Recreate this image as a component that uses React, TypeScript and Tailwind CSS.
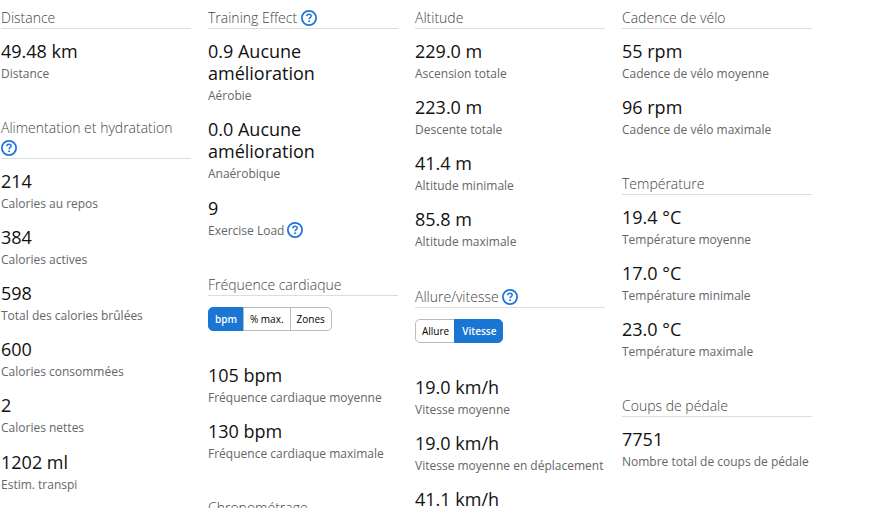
import React from 'react';

interface Stat {
    value: string;
    label: string;
    help?: boolean;
}

interface SectionProps {
    title: string;
    help?: boolean;
    className?: string;
    stats?: Stat[];
    children?: React.ReactNode;
}

const HelpIcon: React.FC<{ className?: string }> = ({ className = '' }) => (
    <svg className={`inline-block h-4 w-4 shrink-0 ${className}`} viewBox="0 0 16 16" fill="none">
        <circle cx="8" cy="8" r="7.1" stroke="#1f74dc" strokeWidth="1.8" />
        <path d="M5.8 6.2c0-1.3.9-2 2.2-2s2.2.8 2.2 1.9c0 1.4-2.1 1.6-2.1 3.1" stroke="#1f74dc" strokeWidth="1.5" />
        <circle cx="8.1" cy="11.3" r="0.95" fill="#1f74dc" />
    </svg>
);

const StatBlock: React.FC<Stat> = ({ value, label, help }) => (
    <div className={`mb-[11.08px] ${help ? 'pt-[0.3px]' : ''}`}>
        <div className="text-[18px] leading-[22.05px] text-[#111]">{value}</div>
        <div className="mt-px flex h-[22px] items-center text-[12px] leading-[22px] text-[#666] whitespace-nowrap">
            {label}
            {help && <HelpIcon className="-mt-px ml-[3px]" />}
        </div>
    </div>
);

const Section: React.FC<SectionProps> = ({ title, help, className = '', stats = [], children }) => (
    <section className={className}>
        <h3 className="mb-[11px] border-b border-[#ddd] text-[14px] font-light leading-5 text-[#444]">
            {title} {help && <HelpIcon className="-mt-[3px] align-middle" />}
        </h3>
        {children}
        {stats.map((stat) => (
            <StatBlock key={stat.label} {...stat} />
        ))}
    </section>
);

const Toggle: React.FC<{ options: string[]; active: string }> = ({ options, active }) => (
    <div className="mb-[33px] flex h-6 w-fit text-[10px]">
        {options.map((option) => (
            <button
                key={option}
                className={`-ml-px border px-1.5 pt-px first:ml-0 first:rounded-l-[5px] last:rounded-r-[5px] ${
                    option === active
                        ? 'border-[#1976d2] bg-[#1976d2] font-semibold text-white last:-ml-[2px] last:pl-[7px]'
                        : 'border-[#bbb] bg-white text-black'
                }`}
            >
                {option}
            </button>
        ))}
    </div>
);

const App: React.FC = () => (
    <main className="flex h-[508px] w-[887px] gap-[17px] overflow-hidden bg-white pl-px pt-2 font-['Open_Sans',sans-serif]">
        <div className="w-[190px] shrink-0">
            <Section title="Distance" stats={[{ value: '49.48 km', label: 'Distance' }]} />
            <Section
                title="Alimentation et hydratation"
                help
                className="mt-[32.89px]"
                stats={[
                    { value: '214', label: 'Calories au repos' },
                    { value: '384', label: 'Calories actives' },
                    { value: '598', label: 'Total des calories brûlées' },
                    { value: '600', label: 'Calories consommées' },
                    { value: '2', label: 'Calories nettes' },
                    { value: '1202 ml', label: 'Estim. transpi' },
                ]}
            />
        </div>
        <div className="w-[190px] shrink-0">
            <Section
                title="Training Effect"
                help
                stats={[
                    { value: '0.9 Aucune amélioration', label: 'Aérobie' },
                    { value: '0.0 Aucune amélioration', label: 'Anaérobique' },
                    { value: '9', label: 'Exercise Load', help: true },
                ]}
            />
            <Section
                title="Fréquence cardiaque"
                className="mt-[33.1px]"
                stats={[
                    { value: '105 bpm', label: 'Fréquence cardiaque moyenne' },
                    { value: '130 bpm', label: 'Fréquence cardiaque maximale' },
                ]}
            >
                <Toggle options={['bpm', '% max.', 'Zones']} active="bpm" />
            </Section>
            <Section title="Chronométrage" className="mt-[32.85px]" />
        </div>
        <div className="w-[190px] shrink-0">
            <Section
                title="Altitude"
                stats={[
                    { value: '229.0 m', label: 'Ascension totale' },
                    { value: '223.0 m', label: 'Descente totale' },
                    { value: '41.4 m', label: 'Altitude minimale' },
                    { value: '85.8 m', label: 'Altitude maximale' },
                ]}
            />
            <Section
                title="Allure/vitesse"
                help
                className="mt-[33.5px]"
                stats={[
                    { value: '19.0 km/h', label: 'Vitesse moyenne' },
                    { value: '19.0 km/h', label: 'Vitesse moyenne en déplacement' },
                    { value: '41.1 km/h', label: 'Vitesse maximale' },
                ]}
            >
                <Toggle options={['Allure', 'Vitesse']} active="Vitesse" />
            </Section>
        </div>
        <div className="w-[190px] shrink-0">
            <Section
                title="Cadence de vélo"
                stats={[
                    { value: '55 rpm', label: 'Cadence de vélo moyenne' },
                    { value: '96 rpm', label: 'Cadence de vélo maximale' },
                ]}
            />
            <Section
                title="Température"
                className="mt-[32.85px]"
                stats={[
                    { value: '19.4 °C', label: 'Température moyenne' },
                    { value: '17.0 °C', label: 'Température minimale' },
                    { value: '23.0 °C', label: 'Température maximale' },
                ]}
            />
            <Section title="Coups de pédale" className="mt-[32.85px]" stats={[{ value: '7751', label: 'Nombre total de coups de pédale' }]} />
        </div>
    </main>
);

export default App;
